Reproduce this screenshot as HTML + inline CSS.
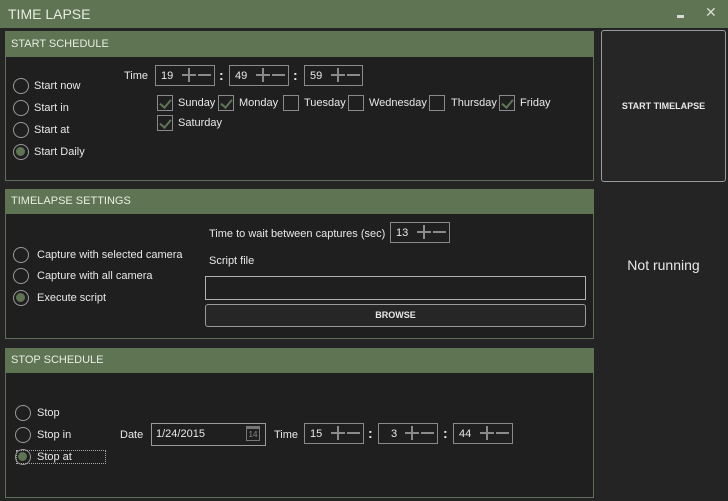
<!DOCTYPE html>
<html><head><meta charset="utf-8"><style>
*{margin:0;padding:0;box-sizing:border-box}
body{width:728px;height:501px;background:#242424;font-family:"Liberation Sans",sans-serif;color:#e8e8e8;position:relative;overflow:hidden;font-size:11px}
.a{position:absolute;white-space:nowrap}
.tb{left:0;top:0;width:728px;height:28px;background:#5e7452}
.pn{border:1px solid #5f6e58;background:#1f1f1f}
.hd{background:#5e7452;color:#e8eee4;font-size:11px;padding-left:6px;line-height:26px}
.r{width:16px;height:16px;border:1.5px solid #9a9a9a;border-radius:50%}
.r.on::after{content:"";position:absolute;left:2px;top:2px;width:9px;height:9px;border-radius:50%;background:#5e7452}
.cb{width:16px;height:16px;border:1.5px solid #8a8a8a}
.cb.on::after{content:"";position:absolute;left:4px;top:1px;width:5px;height:9px;border:solid #5f7556;border-width:0 2px 2px 0;transform:rotate(40deg)}
.sp{height:21px;border:1.5px solid #8a8a8a}
.sp span{position:absolute;left:5px;top:4px;font-size:11px}
.sp b{position:absolute;background:#8a8a8a}
.col{font-weight:bold;font-size:14px}
</style></head><body>
<div class="a tb"></div>
<div class="a" style="left:8px;top:6px;font-size:14px;color:#e6ece2">TIME LAPSE</div>
<div class="a" style="left:677px;top:15px;width:7px;height:3px;background:#d8ddd4"></div>
<div class="a" style="left:705px;top:4px;font-size:14px;color:#d8ddd4">✕</div>

<div class="a pn" style="left:5px;top:31px;width:589px;height:150px"></div>
<div class="a hd" style="left:5px;top:31px;width:589px;height:26px">START SCHEDULE</div>
<div class="a r" style="left:13px;top:78px"></div><div class="a" style="left:34px;top:80px">Start now</div>
<div class="a r" style="left:13px;top:100px"></div><div class="a" style="left:34px;top:102px">Start in</div>
<div class="a r" style="left:13px;top:122px"></div><div class="a" style="left:34px;top:124px">Start at</div>
<div class="a r on" style="left:13px;top:144px"></div><div class="a" style="left:34px;top:146px">Start Daily</div>
<div class="a" style="left:124px;top:70px">Time</div>
<div class="a sp" style="left:155px;top:65px;width:60px"><span>19</span><b style="left:26px;top:8px;width:14px;height:2px"></b><b style="left:32px;top:2px;width:2px;height:14px"></b><b style="left:42px;top:8px;width:13px;height:2px"></b></div>
<div class="a col" style="left:219px;top:67px">:</div>
<div class="a sp" style="left:229px;top:65px;width:60px"><span>49</span><b style="left:26px;top:8px;width:14px;height:2px"></b><b style="left:32px;top:2px;width:2px;height:14px"></b><b style="left:42px;top:8px;width:13px;height:2px"></b></div>
<div class="a col" style="left:293px;top:67px">:</div>
<div class="a sp" style="left:304px;top:65px;width:59px"><span>59</span><b style="left:26px;top:8px;width:14px;height:2px"></b><b style="left:32px;top:2px;width:2px;height:14px"></b><b style="left:42px;top:8px;width:13px;height:2px"></b></div>
<div class="a cb on" style="left:157px;top:95px"></div><div class="a" style="left:178px;top:97px">Sunday</div>
<div class="a cb on" style="left:218px;top:95px"></div><div class="a" style="left:239px;top:97px">Monday</div>
<div class="a cb" style="left:283px;top:95px"></div><div class="a" style="left:304px;top:97px">Tuesday</div>
<div class="a cb" style="left:348px;top:95px"></div><div class="a" style="left:369px;top:97px">Wednesday</div>
<div class="a cb" style="left:429px;top:95px"></div><div class="a" style="left:451px;top:97px">Thursday</div>
<div class="a cb on" style="left:499px;top:95px"></div><div class="a" style="left:520px;top:97px">Friday</div>
<div class="a cb on" style="left:157px;top:115px"></div><div class="a" style="left:178px;top:117px">Saturday</div>

<div class="a" style="left:601px;top:30px;width:125px;height:152px;border:1.5px solid #9a9a9a;border-radius:3px;background:#262626"></div>
<div class="a" style="left:601px;top:101px;width:125px;text-align:center;font-size:9px;font-weight:bold">START TIMELAPSE</div>
<div class="a" style="left:601px;top:257px;width:125px;text-align:center;font-size:14px">Not running</div>

<div class="a pn" style="left:5px;top:189px;width:589px;height:150px"></div>
<div class="a hd" style="left:5px;top:189px;width:589px;height:25px;line-height:25px">TIMELAPSE SETTINGS</div>
<div class="a r" style="left:13px;top:247px"></div><div class="a" style="left:37px;top:249px">Capture with selected camera</div>
<div class="a r" style="left:13px;top:268px"></div><div class="a" style="left:37px;top:270px">Capture with all camera</div>
<div class="a r on" style="left:13px;top:290px"></div><div class="a" style="left:37px;top:292px">Execute script</div>
<div class="a" style="left:209px;top:228px">Time to wait between captures (sec)</div>
<div class="a sp" style="left:390px;top:222px;width:60px"><span>13</span><b style="left:26px;top:8px;width:14px;height:2px"></b><b style="left:32px;top:2px;width:2px;height:14px"></b><b style="left:42px;top:8px;width:13px;height:2px"></b></div>
<div class="a" style="left:209px;top:255px">Script file</div>
<div class="a" style="left:205px;top:276px;width:381px;height:24px;border:1.5px solid #b0b0b0"></div>
<div class="a" style="left:205px;top:304px;width:381px;height:23px;border:1.5px solid #9a9a9a;border-radius:3px;background:#262626;text-align:center;font-size:9px;font-weight:bold;line-height:20px">BROWSE</div>

<div class="a pn" style="left:5px;top:348px;width:589px;height:150px"></div>
<div class="a hd" style="left:5px;top:348px;width:589px;height:25px;line-height:25px">STOP SCHEDULE</div>
<div class="a r" style="left:15px;top:405px"></div><div class="a" style="left:37px;top:407px">Stop</div>
<div class="a r" style="left:15px;top:427px"></div><div class="a" style="left:37px;top:429px">Stop in</div>
<div class="a" style="left:16px;top:450px;width:90px;height:14px;border:1px dotted #aaa"></div>
<div class="a r on" style="left:15px;top:449px"></div><div class="a" style="left:37px;top:451px">Stop at</div>
<div class="a" style="left:120px;top:429px">Date</div>
<div class="a" style="left:151px;top:423px;width:115px;height:23px;border:1.5px solid #9a9a9a"></div>
<div class="a" style="left:156px;top:428px">1/24/2015</div>
<div class="a" style="left:246px;top:426px;width:14px;height:15px;border:1px solid #777;border-top:3px solid #777;font-size:8px;color:#888;text-align:center;line-height:12px">14</div>
<div class="a" style="left:274px;top:429px">Time</div>
<div class="a sp" style="left:304px;top:423px;width:60px"><span>15</span><b style="left:26px;top:8px;width:14px;height:2px"></b><b style="left:32px;top:2px;width:2px;height:14px"></b><b style="left:42px;top:8px;width:13px;height:2px"></b></div>
<div class="a col" style="left:368px;top:425px">:</div>
<div class="a sp" style="left:378px;top:423px;width:60px"><span style="left:12px">3</span><b style="left:26px;top:8px;width:14px;height:2px"></b><b style="left:32px;top:2px;width:2px;height:14px"></b><b style="left:42px;top:8px;width:13px;height:2px"></b></div>
<div class="a col" style="left:443px;top:425px">:</div>
<div class="a sp" style="left:453px;top:423px;width:60px"><span>44</span><b style="left:26px;top:8px;width:14px;height:2px"></b><b style="left:32px;top:2px;width:2px;height:14px"></b><b style="left:42px;top:8px;width:13px;height:2px"></b></div>
</body></html>
